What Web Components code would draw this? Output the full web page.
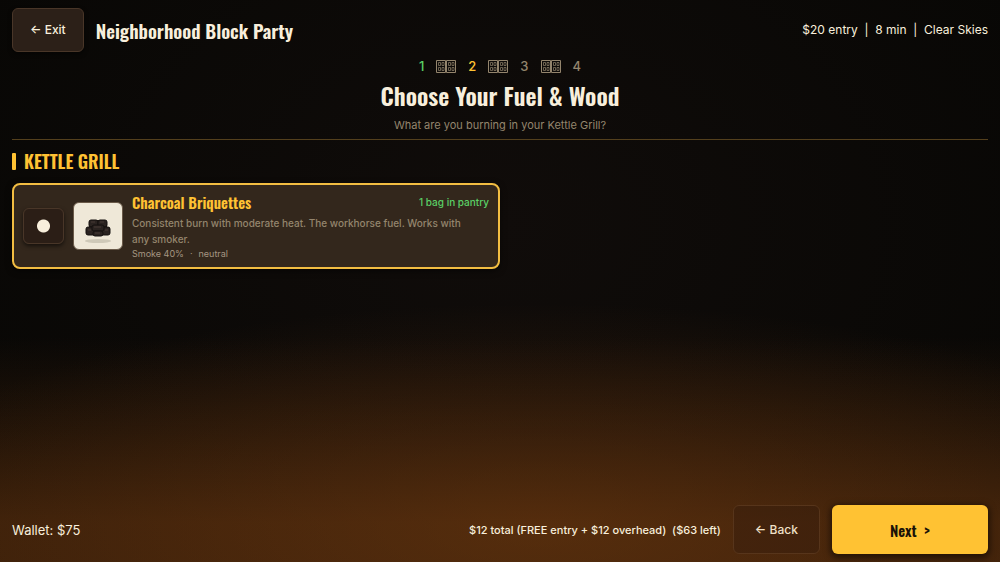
<!DOCTYPE html>
<html lang="en">
<head>
<meta charset="UTF-8">
<meta name="viewport" content="width=device-width, initial-scale=1">
<title>Neighborhood Block Party</title>
<style>
    :root {
        --cream: #f8efdc;
        --gold: #ffc233;
        --green: #5bd066;
        --muted: #94856d;
        --panel: #33271c;
        --display: Oswald, "Liberation Sans Narrow", sans-serif;
    }
    body {
        margin: 0;
        color: var(--cream);
        font-family: Inter, sans-serif;
        background: #0b0907;
    }
</style>
</head>
<body>
<cookout-app></cookout-app>

<script>
class GameButton extends HTMLElement {
    constructor() {
        super();
        this.attachShadow({ mode: 'open' });
    }

    connectedCallback() {
        this.shadowRoot.innerHTML = `
            <style>
                :host { display: block; }
                button {
                    box-sizing: border-box;
                    display: block;
                    width: 100%;
                    min-height: 44px;
                    padding: 0 17px;
                    border: 1px solid #493628;
                    border-radius: 6px;
                    background: #2c2018;
                    color: var(--cream);
                    font: 500 12px/16px Inter, sans-serif;
                    white-space: pre;
                    box-shadow: 0 2px 4px rgba(0, 0, 0, 0.5);
                }
                :host([kind="ghost"]) button {
                    min-height: 49px;
                    padding: 0 21px;
                    border-color: #57351b;
                    background: rgba(44, 24, 12, 0.3);
                    box-shadow: none;
                    color: #f0e0c8;
                }
                :host([kind="primary"]) button {
                    min-height: 49px;
                    border: 0;
                    background: var(--gold);
                    color: #1a1208;
                    font: 600 15px/20px var(--display);
                    box-shadow: 0 2px 6px 2px rgba(0, 0, 0, 0.5);
                }
            </style>
            <button type="button"><slot></slot></button>
        `;
    }
}

class EventHeader extends HTMLElement {
    constructor() {
        super();
        this.attachShadow({ mode: 'open' });
    }

    connectedCallback() {
        this.shadowRoot.innerHTML = `
            <style>
                :host {
                    display: flex;
                    align-items: center;
                    gap: 12px;
                    padding: 8px 12px 0;
                }
                h1 {
                    flex: 1;
                    margin: 0;
                    font: 600 19px/28px var(--display);
                }
                .info { font-size: 12px; line-height: 16px; white-space: pre; }
            </style>
            <game-button>← Exit</game-button>
            <h1><slot></slot></h1>
            <div class="info"><slot name="info"></slot></div>
        `;
    }
}

class StepTrail extends HTMLElement {
    constructor() {
        super();
        this.attachShadow({ mode: 'open' });
    }

    connectedCallback() {
        const current = Number(this.getAttribute('current'));
        const total = Number(this.getAttribute('total'));
        const separator = `
            <svg width="20" height="13" viewBox="0 0 20 13" fill="none" stroke="currentColor" aria-hidden="true">
                <path d="M.5 .5h9v12h-9zM10.5 .5h9v12h-9z"/>
                <path d="M2.5 2.5h2v3h-2zM6 2.5h2v3H6zM2.5 7.5h2v3h-2zM6 7.5h2v3H6zM12.5 2.5h2v3h-2zM16 2.5h2v3h-2zM12.5 7.5h2v3h-2zM16 7.5h2v3h-2z" stroke-width=".7"/>
            </svg>`;
        const steps = [];
        for (let i = 1; i <= total; i++) {
            const state = i < current ? 'done' : i === current ? 'now' : '';
            steps.push(`<span class="${state}">${i}</span>`);
        }
        this.shadowRoot.innerHTML = `
            <style>
                :host {
                    display: flex;
                    justify-content: center;
                    align-items: center;
                    gap: 12px;
                    font-size: 13px;
                    line-height: 16px;
                    font-weight: 500;
                    color: var(--muted);
                }
                .done { color: var(--green); }
                .now { color: var(--gold); }
            </style>
            ${steps.join(separator)}
        `;
    }
}

class FuelSection extends HTMLElement {
    constructor() {
        super();
        this.attachShadow({ mode: 'open' });
    }

    connectedCallback() {
        this.shadowRoot.innerHTML = `
            <style>
                :host { display: block; padding: 11px 12px; }
                h3 {
                    display: flex;
                    align-items: center;
                    gap: 8px;
                    margin: 0 0 12px;
                    color: var(--gold);
                    font: 600 18px/20px var(--display);
                    text-transform: uppercase;
                }
                h3::before {
                    content: "";
                    width: 4px;
                    height: 17px;
                    border-radius: 1px;
                    background: var(--gold);
                }
                .list { display: grid; grid-template-columns: 1fr 1fr; }
            </style>
            <h3>${this.getAttribute('heading')}</h3>
            <div class="list"><slot></slot></div>
        `;
    }
}

class FuelCard extends HTMLElement {
    constructor() {
        super();
        this.attachShadow({ mode: 'open' });
    }

    connectedCallback() {
        this.shadowRoot.innerHTML = `
            <style>
                :host { display: block; }
                label {
                    box-sizing: border-box;
                    display: flex;
                    align-items: center;
                    gap: 9px;
                    min-height: 86px;
                    padding: 6px 9px;
                    border: 2px solid #f2bd42;
                    border-radius: 8px;
                    background: var(--panel);
                    box-shadow: 0 2px 6px rgba(0, 0, 0, 0.5);
                }
                input {
                    appearance: none;
                    flex: none;
                    box-sizing: border-box;
                    width: 41px;
                    height: 36px;
                    margin: 0;
                    border: 1px solid #493628;
                    border-radius: 6px;
                    background: #2b1e16;
                    box-shadow: 0 2px 4px rgba(0, 0, 0, 0.6);
                }
                input:checked {
                    background: radial-gradient(circle, var(--cream) 6px, #2b1e16 7px);
                }
                .art {
                    flex: none;
                    box-sizing: border-box;
                    width: 50px;
                    height: 48px;
                    border: 1px solid #6a5a49;
                    border-radius: 6px;
                    background: #efe8d8;
                }
                .art svg { display: block; }
                .text { flex: 1; }
                .head { display: flex; justify-content: space-between; align-items: center; }
                h4 {
                    margin: 0;
                    color: var(--gold);
                    font: 600 15px/22px var(--display);
                }
                .stock { color: var(--green); font-size: 10px; line-height: 16px; font-weight: 500; }
                p { margin: 2px 0 0; max-width: 340px; color: var(--muted); font-size: 10px; line-height: 16px; font-weight: 500; }
                .traits { display: flex; gap: 6px; color: #a59682; font-size: 9px; line-height: 14px; }
            </style>
            <label>
                <input type="radio" name="fuel" checked>
                <span class="art">
                    <svg width="48" height="46" viewBox="0 0 48 46" aria-hidden="true">
                        <ellipse cx="24" cy="38" rx="13" ry="2" fill="#cfc9b8"/>
                        <path d="M15 18l3-1h12l3 2v5l3 1v5l-3 2h-4l-2 1h-6l-2-1h-5l-2-2v-4l3-2z" fill="#211b18"/>
                        <g fill="#2a2320" stroke="#15110f" stroke-width="1">
                            <rect x="15" y="17" width="9" height="7" rx="2"/>
                            <rect x="24" y="17" width="9" height="7" rx="2"/>
                            <rect x="12" y="24" width="9" height="8" rx="2"/>
                            <rect x="27" y="24" width="9" height="8" rx="2"/>
                            <rect x="18" y="22" width="12" height="6" rx="2"/>
                            <rect x="19" y="28" width="10" height="5" rx="2"/>
                        </g>
                        <path d="M17 19h4M26 19h4M20 24h7M14 27h3M31 27h3M21 30h5" fill="none" stroke="#463b35"/>
                    </svg>
                </span>
                <div class="text">
                    <div class="head">
                        <h4>${this.getAttribute('name')}</h4>
                        <span class="stock">${this.getAttribute('stock')}</span>
                    </div>
                    <p><slot></slot></p>
                    <div class="traits">
                        <span>${this.getAttribute('smoke')}</span>
                        <span>·</span>
                        <span>${this.getAttribute('flavor')}</span>
                    </div>
                </div>
            </label>
        `;
    }
}

class WalletBar extends HTMLElement {
    constructor() {
        super();
        this.attachShadow({ mode: 'open' });
    }

    connectedCallback() {
        this.shadowRoot.innerHTML = `
            <style>
                :host {
                    display: flex;
                    align-items: center;
                    gap: 12px;
                    padding: 8px 12px;
                }
                .wallet { flex: 1; font-size: 13px; line-height: 16px; }
                .cost { font-size: 11px; line-height: 16px; font-weight: 500; white-space: pre; }
                .next { width: 16%; }
            </style>
            <span class="wallet">${this.getAttribute('wallet')}</span>
            <span class="cost"><slot></slot></span>
            <game-button kind="ghost">← Back</game-button>
            <game-button kind="primary" class="next">Next  &gt;</game-button>
        `;
    }
}

class CookoutApp extends HTMLElement {
    constructor() {
        super();
        this.attachShadow({ mode: 'open' });
    }

    connectedCallback() {
        this.shadowRoot.innerHTML = `
            <style>
                :host {
                    display: flex;
                    flex-direction: column;
                    min-height: 100vh;
                    background:
                        radial-gradient(ellipse 70% 40% at 54% 94%, rgba(116, 60, 16, 0.45), transparent),
                        linear-gradient(to bottom, transparent 60%, rgba(76, 40, 12, 0.35) 77%, rgba(76, 40, 12, 0.75) 93%),
                        radial-gradient(ellipse 60% 80% at 50% 40%, #100c0a, #080705);
                }
                .intro {
                    margin: 0 12px;
                    padding: 6px 0;
                    border-bottom: 1px solid #54401d;
                    text-align: center;
                }
                h2 { margin: 4px 0 5px; font: 600 24px/34px var(--display); }
                p { margin: 0; color: var(--muted); font-size: 11px; line-height: 16px; }
                main { flex: 1; }
            </style>
            <event-header>
                Neighborhood Block Party
                <span slot="info">$20 entry  |  8 min  |  Clear Skies</span>
            </event-header>
            <div class="intro">
                <step-trail current="2" total="4"></step-trail>
                <h2>Choose Your Fuel &amp; Wood</h2>
                <p>What are you burning in your Kettle Grill?</p>
            </div>
            <main>
                <fuel-section heading="Kettle Grill">
                    <fuel-card name="Charcoal Briquettes" stock="1 bag in pantry" smoke="Smoke 40%" flavor="neutral">Consistent burn with moderate heat. The workhorse fuel. Works with any smoker.</fuel-card>
                </fuel-section>
            </main>
            <wallet-bar wallet="Wallet: $75">$12 total (FREE entry + $12 overhead)  ($63 left)</wallet-bar>
        `;
    }
}

customElements.define('game-button', GameButton);
customElements.define('event-header', EventHeader);
customElements.define('step-trail', StepTrail);
customElements.define('fuel-section', FuelSection);
customElements.define('fuel-card', FuelCard);
customElements.define('wallet-bar', WalletBar);
customElements.define('cookout-app', CookoutApp);
</script>
</body>
</html>
